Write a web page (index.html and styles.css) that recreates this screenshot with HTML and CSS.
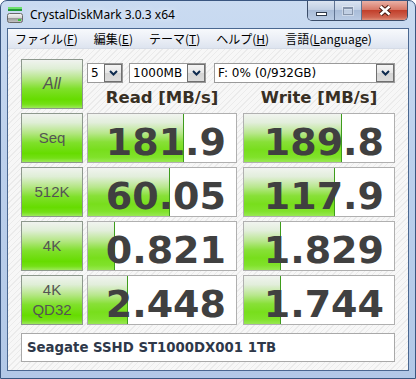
FILE: index.html
```html
<!DOCTYPE html>
<html lang="ja">
<head>
<meta charset="utf-8">
<title>CrystalDiskMark 3.0.3 x64</title>
<link rel="stylesheet" href="styles.css">
</head>
<body>
<div class="window">
  <div class="titlebar">
    <svg class="app-icon" width="16" height="16" viewBox="0 0 16 16">
      <defs>
        <linearGradient id="drv" x1="0" y1="0" x2="0" y2="1">
          <stop offset="0" stop-color="#f4f4f4"/>
          <stop offset="0.5" stop-color="#d6d6d6"/>
          <stop offset="0.55" stop-color="#9a9a9a"/>
          <stop offset="1" stop-color="#c8c8c8"/>
        </linearGradient>
      </defs>
      <rect x="1" y="0" width="14" height="2" fill="#6ee06e"/>
      <rect x="1" y="2" width="14" height="2" fill="#1f9a3a"/>
      <rect x="0.5" y="6.5" width="15" height="9" rx="2" fill="url(#drv)" stroke="#6a6a6a"/>
      <rect x="11" y="12" width="3" height="2" fill="#38c838"/>
    </svg>
    <span class="title">CrystalDiskMark 3.0.3 x64</span>
    <div class="caption">
      <div class="cb min"><span class="min-glyph"></span></div>
      <div class="cb max"><span class="max-glyph"></span></div>
      <div class="cb close">
        <svg width="14" height="11" viewBox="0 0 14 11">
          <path d="M2.5 1.5 L11.5 9.5 M11.5 1.5 L2.5 9.5" stroke="#4a1d14" stroke-width="4.6"/>
          <path d="M2.5 1.5 L11.5 9.5 M11.5 1.5 L2.5 9.5" stroke="#ffffff" stroke-width="2.4"/>
        </svg>
      </div>
    </div>
  </div>
  <div class="client">
    <div class="menubar">
      <span class="menu-item">ファイル(<u>F</u>)</span>
      <span class="menu-item">編集(<u>E</u>)</span>
      <span class="menu-item">テーマ(<u>T</u>)</span>
      <span class="menu-item">ヘルプ(<u>H</u>)</span>
      <span class="menu-item">言語(<u>L</u>anguage)</span>
    </div>
    <div class="panel">
      <div class="grid">
        <div class="btn all">All</div>
        <div class="controls">
          <div class="combos">
            <div class="combo c-count"><span class="combo-text">5</span><span class="combo-btn"><svg width="9" height="6" viewBox="0 0 9 6"><path d="M1 1 L4.5 4.5 L8 1" fill="none" stroke="#0d2a4e" stroke-width="2"/></svg></span></div>
            <div class="combo c-size"><span class="combo-text">1000MB</span><span class="combo-btn"><svg width="9" height="6" viewBox="0 0 9 6"><path d="M1 1 L4.5 4.5 L8 1" fill="none" stroke="#0d2a4e" stroke-width="2"/></svg></span></div>
            <div class="combo c-drive"><span class="combo-text">F: 0% (0/932GB)</span><span class="combo-btn"><svg width="9" height="6" viewBox="0 0 9 6"><path d="M1 1 L4.5 4.5 L8 1" fill="none" stroke="#0d2a4e" stroke-width="2"/></svg></span></div>
          </div>
          <div class="headers">
            <div class="hdr read-h">Read [MB/s]</div>
            <div class="hdr write-h">Write [MB/s]</div>
          </div>
        </div>

        <div class="btn">Seq</div>
        <div class="cell"><div class="bar" style="width:96px"></div><div class="val">181.9</div></div>
        <div class="cell write"><div class="bar" style="width:98px"></div><div class="val">189.8</div></div>

        <div class="btn">512K</div>
        <div class="cell"><div class="bar" style="width:82px"></div><div class="val">60.05</div></div>
        <div class="cell write"><div class="bar" style="width:91px"></div><div class="val">117.9</div></div>

        <div class="btn">4K</div>
        <div class="cell"><div class="bar" style="width:27px"></div><div class="val">0.821</div></div>
        <div class="cell write"><div class="bar" style="width:37px"></div><div class="val">1.829</div></div>

        <div class="btn two-line">4K<br>QD32</div>
        <div class="cell"><div class="bar" style="width:40px"></div><div class="val">2.448</div></div>
        <div class="cell write"><div class="bar" style="width:37px"></div><div class="val">1.744</div></div>
      </div>
      <div class="comment">Seagate SSHD ST1000DX001 1TB</div>
    </div>
  </div>
</div>
</body>
</html>
```

FILE: styles.css
```css
html, body {
  margin: 0;
  padding: 0;
}
body {
  width: 416px;
  height: 379px;
  overflow: hidden;
  background: #ffffff;
}
.window {
  box-sizing: border-box;
  width: 416px;
  height: 379px;
  border: 1px solid #3a5680;
  border-radius: 7px 7px 0 0;
  background: linear-gradient(180deg, #cadbf1 0%, #bcd0ec 40%, #b2c8e7 100%);
  padding: 0 6px 7px 6px;
  display: flex;
  flex-direction: column;
}
.titlebar {
  height: 27px;
  display: flex;
  align-items: center;
  flex: none;
}
.app-icon {
  flex: none;
  margin-top: 0;
}
.title {
  margin-left: 7px;
  font-family: "Noto Sans", "DejaVu Sans", sans-serif;
  font-size: 12px;
  color: #000;
  text-shadow: 0 0 6px rgba(255,255,255,0.9);
}
.caption {
  margin-left: auto;
  margin-right: 1px;
  align-self: flex-start;
  display: flex;
  height: 19px;
  border: 1px solid #3b4d6a;
  border-top: none;
  border-radius: 0 0 5px 5px;
  overflow: hidden;
}
.cb {
  width: 26px;
  display: flex;
  align-items: center;
  justify-content: center;
  background: linear-gradient(180deg, #dbe4f1 0%, #c2d0e4 45%, #a9bcd8 50%, #b9cbe4 100%);
  border-right: 1px solid #607392;
}
.cb.max {
  width: 26px;
}
.cb.close {
  width: 45px;
  border-right: none;
  background: linear-gradient(180deg, #e9b1a6 0%, #d77867 45%, #c2402c 50%, #cf6450 85%, #de8f7a 100%);
}
.min-glyph {
  display: block;
  width: 9px;
  height: 2px;
  border: 1px solid #2f3a4c;
  background: #fff;
  margin-top: 7px;
}
.max-glyph {
  display: block;
  width: 8px;
  height: 5px;
  border: 1px solid #8795ab;
  border-top-width: 2px;
  background: rgba(255,255,255,0.25);
  box-shadow: 0 0 0 1px rgba(255,255,255,0.35);
}
.client {
  flex: 1;
  display: flex;
  flex-direction: column;
  border: 1px solid #4a6790;
  background: repeating-linear-gradient(135deg, #f7f7f7 0px, #f7f7f7 3px, #ebebeb 3px, #ebebeb 4px);
}
.menubar {
  height: 20px;
  display: flex;
  align-items: center;
  gap: 16px;
  padding-left: 7px;
  background: linear-gradient(180deg, #f7f9fc 0%, #e9edf5 60%, #dde4ef 100%);
  border-bottom: 1px solid #d5dbe6;
  box-sizing: border-box;
  font-family: "Noto Sans CJK JP", "Noto Sans", sans-serif;
  font-size: 12px;
  color: #000;
  flex: none;
}
.menu-item u {
  text-decoration: underline;
  text-underline-offset: 1px;
}
.panel {
  padding: 10px 13px 0 13px;
}
.grid {
  display: grid;
  grid-template-columns: 62px 150px 1fr;
  column-gap: 4px;
  row-gap: 4px;
  grid-auto-rows: 50px;
}
.btn {
  box-sizing: border-box;
  border: 1px solid #8d988d;
  background: linear-gradient(180deg, #f0f3ef 0%, #dfeed6 18%, #b3e682 40%, #7fe02a 60%, #66dc00 82%, #74e016 92%, #9ce95a 100%);
  display: flex;
  align-items: center;
  justify-content: center;
  text-align: center;
  font-family: "Liberation Sans", Arial, sans-serif;
  font-size: 15px;
  line-height: 20px;
  color: #545454;
}
.btn.all {
  font-style: italic;
  font-size: 16px;
}
.controls {
  grid-column: 2 / 4;
  display: flex;
  flex-direction: column;
}
.combos {
  margin-top: 4px;
  display: flex;
  height: 20px;
}
.combo {
  box-sizing: border-box;
  height: 20px;
  border: 1px solid #9a9a9a;
  background: #fff;
  display: flex;
  align-items: stretch;
}
.c-count { width: 36px; }
.c-size { width: 77px; margin-left: 6px; }
.c-drive { flex: 1; margin-left: 8px; }
.combo-text {
  flex: 1;
  padding-left: 3px;
  font-family: "DejaVu Sans", Verdana, sans-serif;
  font-size: 12px;
  line-height: 18px;
  color: #000;
  white-space: nowrap;
  overflow: hidden;
}
.combo-btn {
  box-sizing: border-box;
  width: 18px;
  border: 1px solid #707070;
  background: linear-gradient(180deg, #f4f4f4 0%, #e6e6e6 50%, #d4d4d4 51%, #dcdcdc 100%);
  display: flex;
  align-items: center;
  justify-content: center;
}
.headers {
  display: flex;
  flex: 1;
}
.hdr {
  text-align: center;
  font-family: "DejaVu Sans", Verdana, sans-serif;
  font-weight: bold;
  font-size: 16.5px;
  line-height: 23px;
  padding-top: 3px;
  color: #372f24;
  white-space: nowrap;
}
.read-h { width: 150px; }
.write-h { width: 152px; margin-left: 6px; }
.cell {
  position: relative;
  box-sizing: border-box;
  border: 1px solid #b0b0b0;
  background: #fff;
  overflow: hidden;
}
.cell.write {
  margin-left: 2px;
}
.bar {
  position: absolute;
  left: 0;
  top: 0;
  bottom: 0;
  box-sizing: border-box;
  border-right: 1px solid #3e9c1c;
  background: linear-gradient(180deg, #f1f4f0 0%, #e2eedb 18%, #b8e78c 40%, #88e038 58%, #78de1c 75%, #80e22a 90%, #98e852 100%);
}
.val {
  position: relative;
  text-align: right;
  padding: 8px 10px 0 0;
  line-height: 40px;
  font-family: "DejaVu Sans", Verdana, sans-serif;
  font-weight: bold;
  font-size: 38px;
  color: #404040;
  white-space: nowrap;
}
.comment {
  margin-top: 8px;
  box-sizing: border-box;
  height: 29px;
  border: 1px solid #a9a9a9;
  background: #fff;
  padding-left: 5px;
  font-family: "DejaVu Sans", Verdana, sans-serif;
  font-weight: bold;
  font-size: 13.3px;
  line-height: 27px;
  color: #2e3849;
  white-space: nowrap;
}
```
